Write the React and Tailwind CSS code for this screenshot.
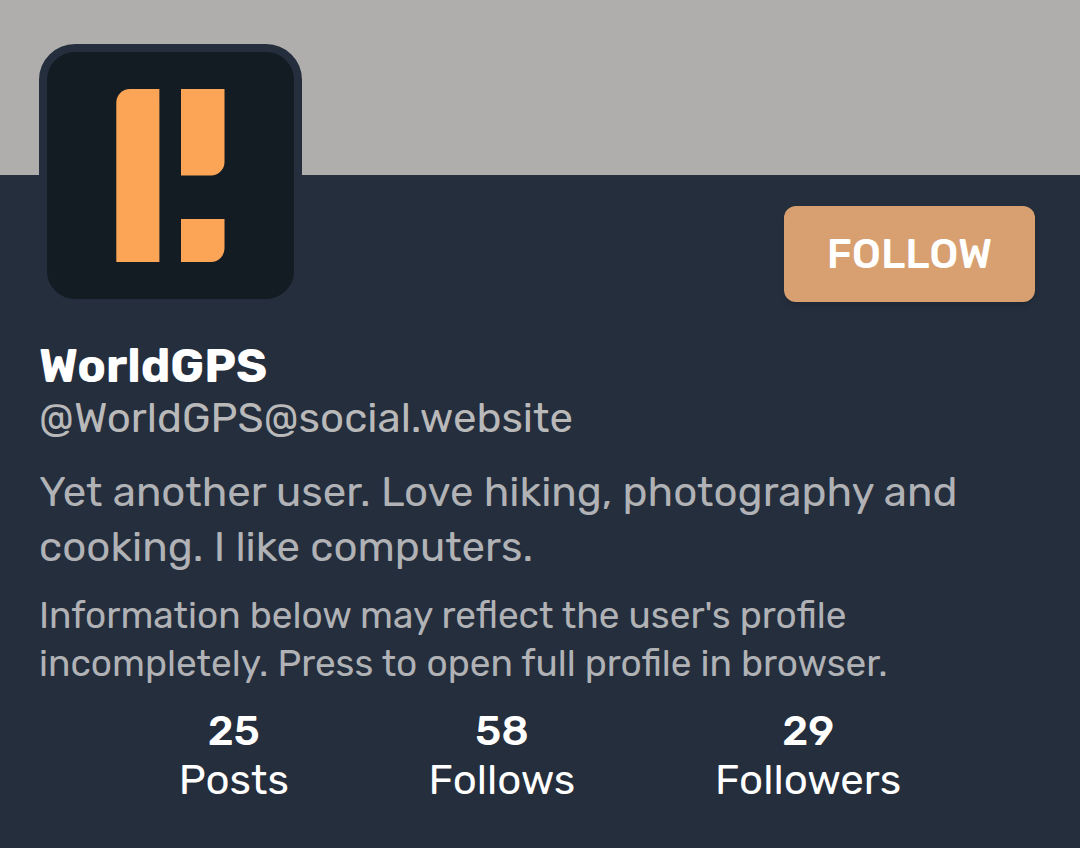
const profile = {
  name: "WorldGPS",
  handle: "@WorldGPS@social.website",
  bio: "Yet another user. Love hiking, photography and cooking. I like computers.",
  url: "#profile",
};

const stats = [
  { label: "Posts", value: 25 },
  { label: "Follows", value: 58 },
  { label: "Followers", value: 29 },
];

const Avatar = () => (
  <div className="-mt-[131px] w-[263px] shrink-0 rounded-[36px] border-8 border-[#252e3d] bg-[#131b23]">
    <svg viewBox="0 0 247 247" className="block w-full" role="img" aria-label="Avatar">
      <g fill="#fca556">
        <path d="M69.3 50.5a13.5 13.5 0 0 1 13.5-13.5h29.6v173H69.3z" />
        <path d="M134 37h43.5v73a13.5 13.5 0 0 1-13.5 13.5h-30z" />
        <path d="M134 167h43.5v29.5a13.5 13.5 0 0 1-13.5 13.5h-30z" />
      </g>
    </svg>
  </div>
);

const App = () => {
  return (
    <div className="min-h-screen bg-[#252e3d] font-['Rubik','Open_Sans',sans-serif] text-white">
      <div className="h-[175px] bg-[#b0aeac]" />

      <main className="px-[39px]">
        <div className="flex items-start justify-between">
          <Avatar />
          <button
            type="button"
            className="mt-[31px] mr-1.5 h-24 w-[251px] rounded-xl bg-[#d8a070] text-[42px] font-medium shadow-md"
          >
            FOLLOW
          </button>
        </div>

        <h1 className="mt-8 text-[47px] leading-[54px] font-bold">{profile.name}</h1>
        <p className="text-[42px] leading-[50px] text-[#b9b9ba]">{profile.handle}</p>
        <p className="mt-[22px] text-[42px] leading-[55px] text-[#b0b2b5]">{profile.bio}</p>
        <a
          href={profile.url}
          className="mt-4 block text-[37px] leading-[48px] text-[#b0b2b5]"
        >
          Information below may reflect the user's profile incompletely. Press to
          open full profile in browser.
        </a>

        <dl className="mt-5 flex justify-evenly text-center text-[42px] leading-[49px]">
          {stats.map((stat) => (
            <div key={stat.label} className="flex flex-col-reverse">
              <dt>{stat.label}</dt>
              <dd className="font-medium">{stat.value}</dd>
            </div>
          ))}
        </dl>
      </main>
    </div>
  );
};

export default App;
